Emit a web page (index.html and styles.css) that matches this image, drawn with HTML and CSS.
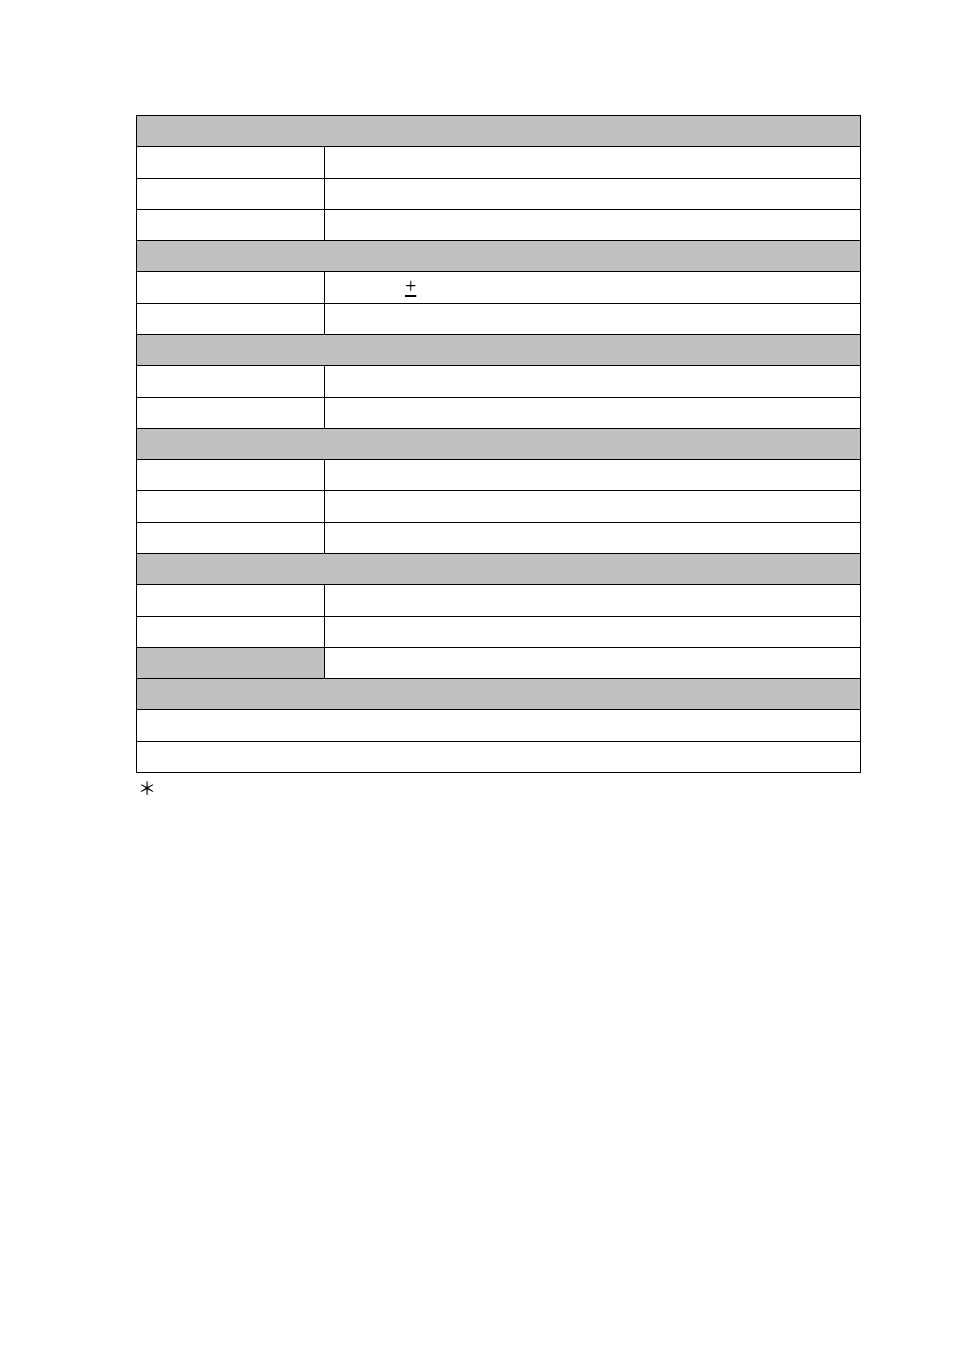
FILE: index.html
```html
<!DOCTYPE html>
<html>
<head>
<meta charset="utf-8">
<link rel="stylesheet" href="styles.css">
</head>
<body>
<div class="page">
  <table class="spec">
    <colgroup><col class="c1"><col class="c2"></colgroup>
    <tr class="sec"><td colspan="2"></td></tr>
    <tr><td></td><td></td></tr>
    <tr><td></td><td></td></tr>
    <tr><td></td><td></td></tr>
    <tr class="sec"><td colspan="2"></td></tr>
    <tr><td></td><td><span class="pm">+</span></td></tr>
    <tr><td></td><td></td></tr>
    <tr class="sec"><td colspan="2"></td></tr>
    <tr><td></td><td></td></tr>
    <tr><td></td><td></td></tr>
    <tr class="sec"><td colspan="2"></td></tr>
    <tr><td></td><td></td></tr>
    <tr><td></td><td></td></tr>
    <tr><td></td><td></td></tr>
    <tr class="sec"><td colspan="2"></td></tr>
    <tr><td></td><td></td></tr>
    <tr><td></td><td></td></tr>
    <tr><td class="grey"></td><td></td></tr>
    <tr class="sec"><td colspan="2"></td></tr>
    <tr><td colspan="2"></td></tr>
    <tr><td colspan="2"></td></tr>
  </table>
  <p class="note">＊</p>
</div>
</body>
</html>
```
FILE: styles.css
```css
html, body {
  margin: 0;
  padding: 0;
  background: #fff;
}
.page {
  padding: 115px 0 0 136px;
  font-family: "Liberation Serif", "Noto Sans CJK JP", serif;
}
.spec {
  border-collapse: collapse;
  width: 725px;
  table-layout: fixed;
}
.c1 { width: 188px; }
.spec td {
  border: 1px solid #000;
  height: 30.29px;
  padding: 0;
  line-height: 1;
  vertical-align: middle;
}
.spec .sec td, .spec td.grey {
  background: #c0c0c0;
}
.pm {
  display: inline-block;
  margin-left: 80px;
  position: relative;
  top: -2px;
  font-size: 20px;
  line-height: 20px;
  text-decoration: underline;
  text-underline-offset: 2px;
}
.note {
  margin: 4px 0 0 2px;
  font-family: "Noto Sans CJK JP", sans-serif;
  font-size: 18px;
  line-height: 20px;
  color: #000;
}
```
